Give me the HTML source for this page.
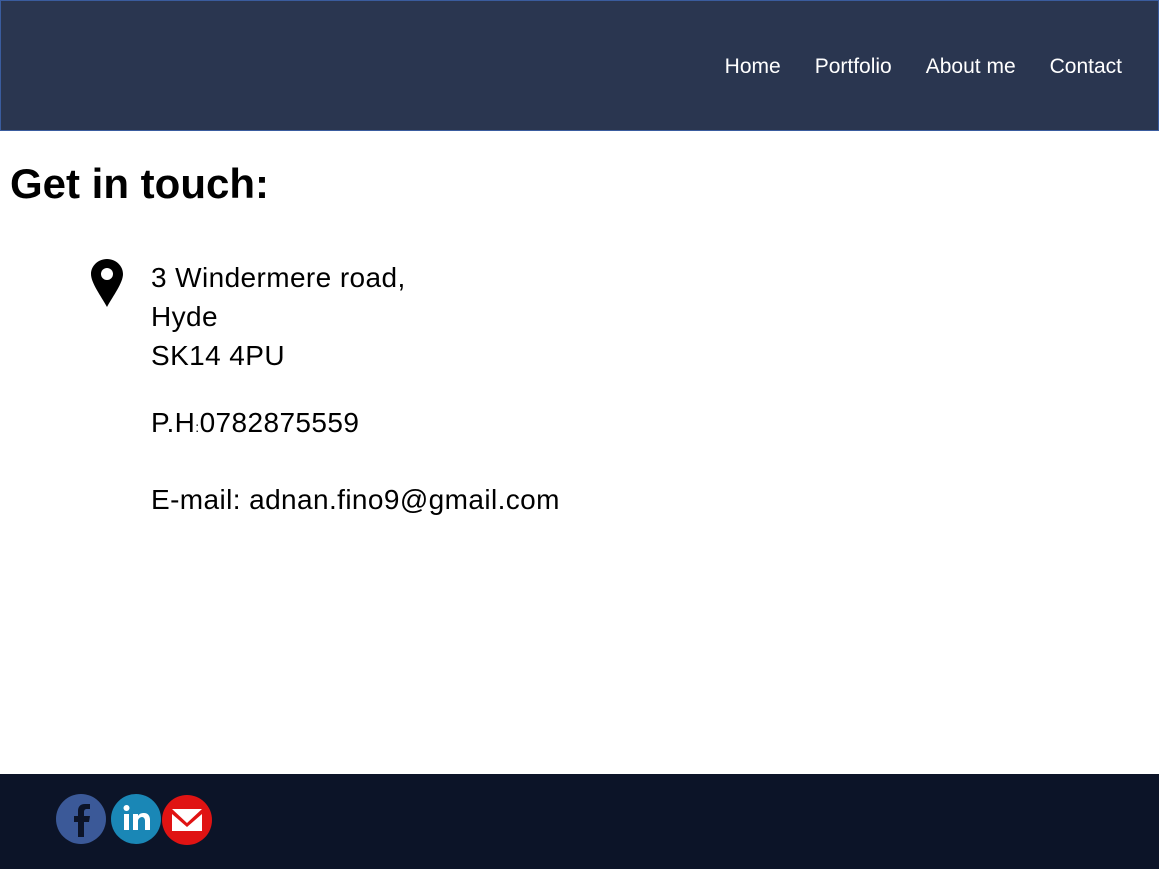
<!DOCTYPE html>
<html><head><meta charset="utf-8"><style>
*{margin:0;padding:0;box-sizing:border-box}
body{width:1159px;height:869px;position:relative;background:#fff;font-family:"Liberation Sans",sans-serif;overflow:hidden}
header{position:absolute;left:0;top:0;width:1159px;height:131px;background:#2a3650;border:1px solid #3a5c9e}
nav{position:absolute;top:54px;right:36px;color:#fff;font-size:21px;white-space:nowrap}
nav span{margin-left:34px}
h1{position:absolute;left:10px;top:160px;font-size:42px;font-weight:bold;color:#000}
.t{position:absolute;left:151px;font-size:28px;color:#000;line-height:39px;letter-spacing:0.4px}
footer{position:absolute;left:0;top:774px;width:1159px;height:95px;background:#0c1428}
</style></head><body>
<header><nav><span>Home</span><span>Portfolio</span><span>About me</span><span>Contact</span></nav></header>
<h1>Get in touch:</h1>
<svg style="position:absolute;left:90px;top:258px" width="34" height="50" viewBox="0 0 34 50"><path d="M17 1C8 1 1 8 1 16c0 9 10 22 16 33C23 38 33 25 33 16 33 8 26 1 17 1z" fill="#000"/><circle cx="17" cy="16" r="6" fill="#fff"/></svg>
<div class="t" style="top:258px">3 Windermere road,<br>Hyde<br>SK14 4PU</div>
<div class="t" style="top:403px">P.H<span style="font-size:14px">:</span>0782875559</div>
<div class="t" style="top:480px">E-mail: adnan.fino9@gmail.com</div>
<footer>
<svg style="position:absolute;left:55px;top:19px" width="160" height="54" viewBox="0 0 160 54">
<circle cx="26" cy="26" r="25" fill="#3b5998"/>
<path d="M29 44V29h5l1-6h-6v-4c0-2 1-3 3-3h3v-5h-5c-5 0-7 3-7 7v5h-4v6h4v15z" fill="#0c1428"/>
<circle cx="81" cy="26" r="25" fill="#1a87b6"/>
<rect x="69" y="21" width="5" height="16" fill="#fff"/><circle cx="71.5" cy="15" r="3" fill="#fff"/>
<path d="M78 21h5v2c1-2 3-3 6-3 4 0 6 3 6 7v10h-5v-9c0-2-1-4-3-4s-4 2-4 4v9h-5z" fill="#fff"/>
<circle cx="132" cy="27" r="25" fill="#e01313"/>
<path d="M117 16h30v22h-30z" fill="#fff"/><path d="M117 16l15 14 15-14v5l-15 13-15-13z" fill="#e01313"/>
</svg>
</footer>
</body></html>
